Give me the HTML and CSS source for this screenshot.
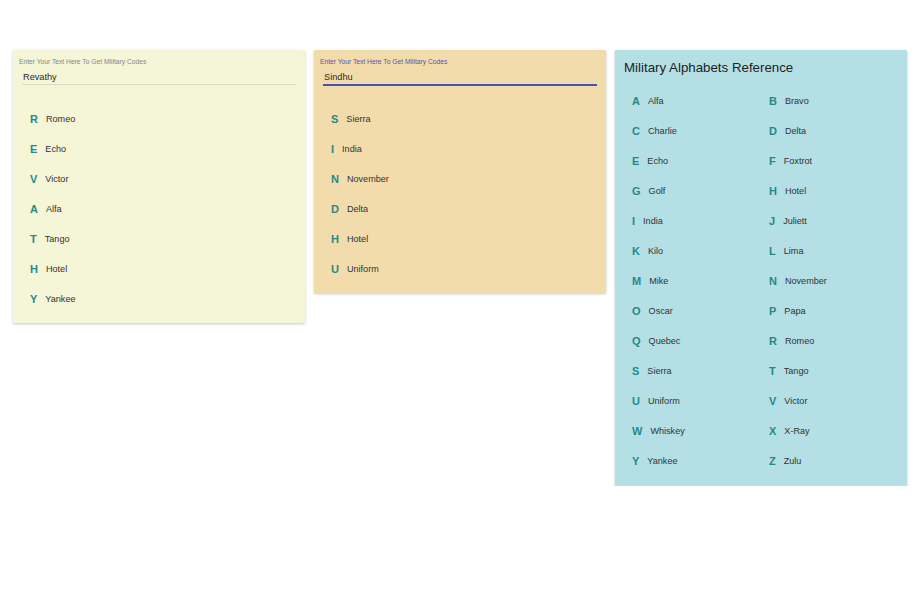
FILE: index.html
```html
<!DOCTYPE html>
<html>
<head>
<meta charset="utf-8">
<link rel="stylesheet" href="styles.css">
</head>
<body>
<div class="page">
  <div class="card card-beige">
    <div class="field">
      <div class="field-label">Enter Your Text Here To Get Military Codes</div>
      <div class="field-input">Revathy</div>
    </div>
    <ul class="codes">
      <li><span class="letter">R</span><span class="word">Romeo</span></li>
      <li><span class="letter">E</span><span class="word">Echo</span></li>
      <li><span class="letter">V</span><span class="word">Victor</span></li>
      <li><span class="letter">A</span><span class="word">Alfa</span></li>
      <li><span class="letter">T</span><span class="word">Tango</span></li>
      <li><span class="letter">H</span><span class="word">Hotel</span></li>
      <li><span class="letter">Y</span><span class="word">Yankee</span></li>
    </ul>
  </div>
  <div class="card card-wheat">
    <div class="field field-focused">
      <div class="field-label">Enter Your Text Here To Get Military Codes</div>
      <div class="field-input">Sindhu</div>
    </div>
    <ul class="codes">
      <li><span class="letter">S</span><span class="word">Sierra</span></li>
      <li><span class="letter">I</span><span class="word">India</span></li>
      <li><span class="letter">N</span><span class="word">November</span></li>
      <li><span class="letter">D</span><span class="word">Delta</span></li>
      <li><span class="letter">H</span><span class="word">Hotel</span></li>
      <li><span class="letter">U</span><span class="word">Uniform</span></li>
    </ul>
  </div>
  <div class="card card-blue">
    <h2 class="ref-title">Military Alphabets Reference</h2>
    <ul class="codes ref-grid">
      <li><span class="letter">A</span><span class="word">Alfa</span></li>
      <li><span class="letter">B</span><span class="word">Bravo</span></li>
      <li><span class="letter">C</span><span class="word">Charlie</span></li>
      <li><span class="letter">D</span><span class="word">Delta</span></li>
      <li><span class="letter">E</span><span class="word">Echo</span></li>
      <li><span class="letter">F</span><span class="word">Foxtrot</span></li>
      <li><span class="letter">G</span><span class="word">Golf</span></li>
      <li><span class="letter">H</span><span class="word">Hotel</span></li>
      <li><span class="letter">I</span><span class="word">India</span></li>
      <li><span class="letter">J</span><span class="word">Juliett</span></li>
      <li><span class="letter">K</span><span class="word">Kilo</span></li>
      <li><span class="letter">L</span><span class="word">Lima</span></li>
      <li><span class="letter">M</span><span class="word">Mike</span></li>
      <li><span class="letter">N</span><span class="word">November</span></li>
      <li><span class="letter">O</span><span class="word">Oscar</span></li>
      <li><span class="letter">P</span><span class="word">Papa</span></li>
      <li><span class="letter">Q</span><span class="word">Quebec</span></li>
      <li><span class="letter">R</span><span class="word">Romeo</span></li>
      <li><span class="letter">S</span><span class="word">Sierra</span></li>
      <li><span class="letter">T</span><span class="word">Tango</span></li>
      <li><span class="letter">U</span><span class="word">Uniform</span></li>
      <li><span class="letter">V</span><span class="word">Victor</span></li>
      <li><span class="letter">W</span><span class="word">Whiskey</span></li>
      <li><span class="letter">X</span><span class="word">X-Ray</span></li>
      <li><span class="letter">Y</span><span class="word">Yankee</span></li>
      <li><span class="letter">Z</span><span class="word">Zulu</span></li>
    </ul>
  </div>
</div>
</body>
</html>
```
FILE: styles.css
```css
* { box-sizing: border-box; }
html, body { margin: 0; padding: 0; background: #ffffff; }
body {
  font-family: "Liberation Sans", Arial, sans-serif;
  color: #333333;
}
.page {
  display: flex;
  align-items: flex-start;
  gap: 9px;
  padding: 50px 13px 0 13px;
}
.card {
  width: 292px;
  flex: 0 0 292px;
  padding: 7px 9px 9px 9px;
  box-shadow: 0 1px 3px rgba(0, 0, 0, 0.22);
  border-radius: 1px;
}
.card-beige { background: #f5f5d7; }
.card-wheat { background: #f3dcab; }
.card-blue { background: #b4dfe5; padding-bottom: 10px; }

.field-label {
  font-size: 6.7px;
  line-height: 10px;
  color: #858585;
  margin-left: -3px;
}
.field-input {
  margin-top: 3px;
  font-size: 9.2px;
  line-height: 14px;
  padding: 0 0 0 1px;
  color: #2a2a2a;
  border-bottom: 1px solid #dcdcc6;
}
.field-focused .field-label { color: #4b55b9; }
.field-focused .field-input {
  border-bottom-color: #4753b8;
  box-shadow: 0 1px 0 #4753b8;
}

.codes {
  list-style: none;
  margin: 19px 0 0 0;
  padding: 0;
}
.codes li {
  height: 30px;
  display: flex;
  align-items: center;
  padding-left: 8px;
}
.letter {
  font-size: 11px;
  font-weight: bold;
  color: #1f8a8a;
  margin-right: 8px;
}
.word {
  font-size: 9.1px;
  color: #333333;
}

.ref-title {
  margin: 0;
  font-size: 13.3px;
  font-weight: normal;
  line-height: 22px;
  color: #222222;
}
.ref-grid {
  margin-top: 7px;
  display: grid;
  grid-template-columns: 1fr 1fr;
}
```
